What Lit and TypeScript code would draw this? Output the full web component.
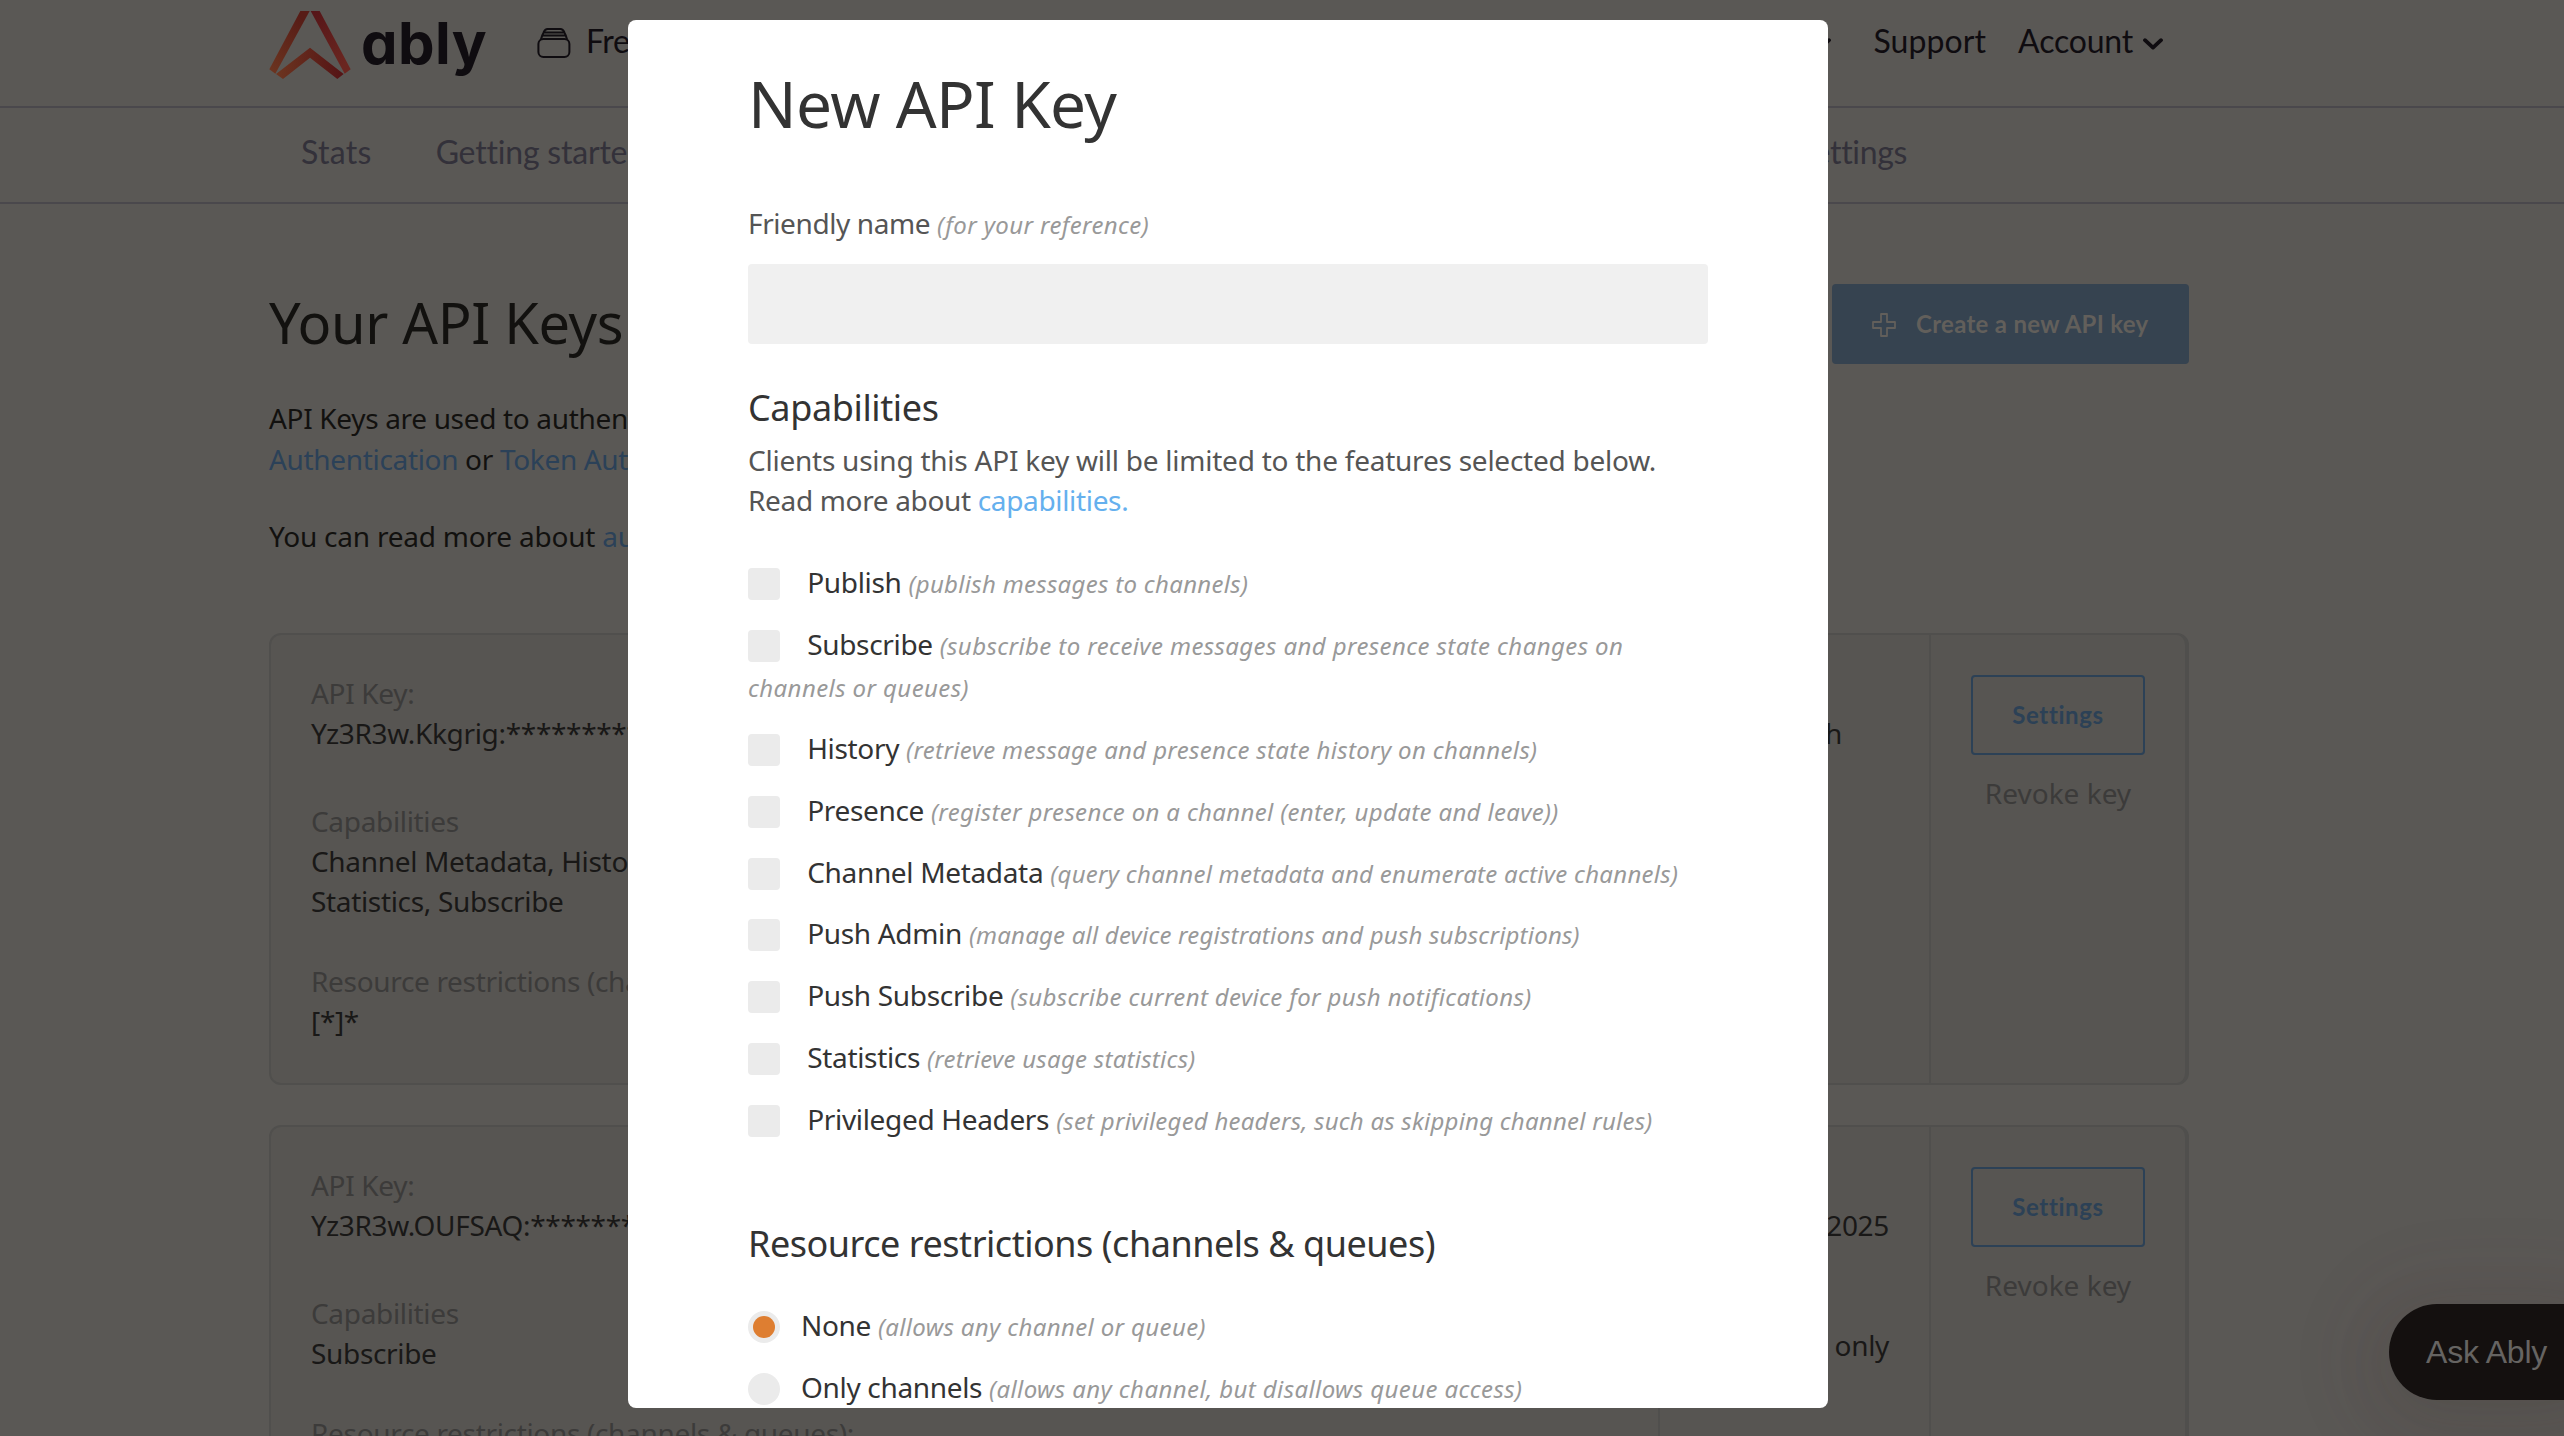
import { LitElement, html, css } from "lit";
import { customElement, state } from "lit/decorators.js";
import { styleMap } from "lit/directives/style-map.js";

interface Group {
  label?: string;
  lines: string[];
}

interface ApiKey {
  groups: Group[];
  details: Group[];
}

interface Option {
  name: string;
  hint: string;
  tracking?: number;
}

const KEYS: ApiKey[] = [
  {
    groups: [
      { label: "API Key:", lines: ["Yz3R3w.Kkgrig:*********"] },
      { label: "Capabilities", lines: ["Channel Metadata, History,", "Statistics, Subscribe"] },
      { label: "Resource restrictions (channels & queues):", lines: ["[*]*"] },
    ],
    details: [{ lines: ["March"] }],
  },
  {
    groups: [
      { label: "API Key:", lines: ["Yz3R3w.OUFSAQ:*********"] },
      { label: "Capabilities", lines: ["Subscribe"] },
      { label: "Resource restrictions (channels & queues):", lines: ["[*]*"] },
    ],
    details: [{ lines: ["2025"] }, { lines: ["only"] }],
  },
];

const CAPABILITIES: Option[] = [
  { name: "Publish", hint: "(publish messages to channels)", tracking: 0.3 },
  {
    name: "Subscribe",
    hint: "(subscribe to receive messages and presence state changes on channels or queues)",
    tracking: 0.4,
  },
  { name: "History", hint: "(retrieve message and presence state history on channels)", tracking: 0.33 },
  { name: "Presence", hint: "(register presence on a channel (enter, update and leave))", tracking: 0.33 },
  { name: "Channel Metadata", hint: "(query channel metadata and enumerate active channels)", tracking: 0.27 },
  { name: "Push Admin", hint: "(manage all device registrations and push subscriptions)", tracking: 0.2 },
  { name: "Push Subscribe", hint: "(subscribe current device for push notifications)" },
  { name: "Statistics", hint: "(retrieve usage statistics)", tracking: 0.26 },
  { name: "Privileged Headers", hint: "(set privileged headers, such as skipping channel rules)", tracking: 0.22 },
];

const RESTRICTIONS: Option[] = [
  { name: "None", hint: "(allows any channel or queue)" },
  { name: "Only channels", hint: "(allows any channel, but disallows queue access)", tracking: 0.4 },
];

const chevron = html`<svg class="chevron" width="20" height="12" viewBox="0 0 20 12">
  <path d="M2 2.2 10 9.6 18 2.2" fill="none" stroke="#0f0c10" stroke-width="3.8" stroke-linecap="round" stroke-linejoin="round" />
</svg>`;

@customElement("site-header")
export class SiteHeader extends LitElement {
  static styles = css`
    :host {
      display: block;
      font-family: Lato, "Noto Sans", sans-serif;
      font-size: 32px;
      white-space: nowrap;
    }
    .bar {
      display: flex;
      align-items: flex-start;
      height: 106px;
      padding: 0 401px 0 269px;
      border-bottom: 2px solid #4a484c;
      color: #0f0c10;
      line-height: 81px;
    }
    .mark {
      margin-top: 10px;
    }
    .word {
      margin-left: 10px;
      font: 700 58px/86px Inter, sans-serif;
      font-feature-settings: "cv11";
      letter-spacing: 0.4px;
    }
    .stack {
      margin: 28px 15px 0 50px;
    }
    .right {
      display: flex;
      margin-left: auto;
    }
    .chevron {
      margin-top: 38px;
    }
    .support {
      margin: 0 32px 0 42px;
      letter-spacing: 0.1px;
    }
    .account {
      margin-right: 10px;
      letter-spacing: -0.2px;
    }
    .tabs {
      display: flex;
      height: 94px;
      padding: 0 657px 0 301px;
      border-bottom: 2px solid #4a484c;
      color: #33313a;
      line-height: 88px;
    }
    .stats {
      letter-spacing: 0.3px;
    }
    .start {
      margin-left: 64px;
      letter-spacing: -0.2px;
    }
    .last {
      margin-left: auto;
    }
  `;

  render() {
    return html`
      <div class="bar">
        <svg class="mark" width="82" height="70" viewBox="0 0 246 210">
          <defs>
            <linearGradient id="l" x1="0" y1="1" x2="0.6" y2="0">
              <stop offset="0" stop-color="#6c3520" />
              <stop offset="1" stop-color="#571c16" />
            </linearGradient>
            <linearGradient id="r" x1="0" y1="0" x2="0.6" y2="1">
              <stop offset="0" stop-color="#551518" />
              <stop offset="1" stop-color="#6a2620" />
            </linearGradient>
            <linearGradient id="c" x1="0" y1="0.5" x2="1" y2="0.5">
              <stop offset="0" stop-color="#6c3520" />
              <stop offset="1" stop-color="#541315" />
            </linearGradient>
          </defs>
          <path d="M94 3h28L19 191 1 178z" fill="url(#l)" />
          <path d="M125 3h27l93 175-18 13z" fill="url(#r)" />
          <path d="M123 113l101 79-19 15-82-64-81 64-21-15z" fill="url(#c)" />
        </svg>
        <span class="word">ably</span>
        <svg class="stack" width="34" height="30" viewBox="0 0 34 30" fill="none" stroke="#0f0c10" stroke-width="2">
          <rect x="1.4" y="11" width="31" height="18" rx="5" />
          <path d="M4 11.2 5.2 7.6H28.8L30 11.2M5.2 7.6 6.6 4.4H27.4L28.8 7.6M6.6 4.4C7.6 2 8.6 1 10.6 1H23.4C25.4 1 26.4 2 27.4 4.4" />
        </svg>
        <span>Free</span>
        <div class="right">
          ${chevron}
          <span class="support">Support</span>
          <span class="account">Account</span>
          ${chevron}
        </div>
      </div>
      <div class="tabs">
        <span class="stats">Stats</span>
        <span class="start">Getting started</span>
        <span class="last">Settings</span>
      </div>
    `;
  }
}

@customElement("key-list")
export class KeyList extends LitElement {
  static styles = css`
    :host {
      display: flex;
      flex-direction: column;
      gap: 40px;
    }
    .card {
      display: flex;
      box-sizing: border-box;
      height: 452px;
      border: 2px solid #504f4d;
      border-right-width: 4px;
      border-radius: 12px;
      background: #575552;
      line-height: 40px;
      white-space: nowrap;
    }
    .info {
      flex: 1;
      padding: 38px 40px;
    }
    .group {
      margin-bottom: 40px;
    }
    .group:first-child {
      margin-bottom: 48px;
    }
    .label {
      color: #3c3b3a;
    }
    .value {
      color: #191817;
    }
    .details {
      box-sizing: border-box;
      width: 271px;
      padding: 78px 40px 0;
      border-left: 2px solid #504f4d;
      text-align: right;
    }
    .details .group {
      margin-bottom: 80px;
    }
    .card:first-child .details {
      padding-right: 87px;
    }
    .actions {
      display: flex;
      flex-direction: column;
      align-items: center;
      box-sizing: border-box;
      width: 256px;
      padding-top: 40px;
      border-left: 2px solid #504f4d;
    }
    .settings {
      box-sizing: border-box;
      width: 174px;
      height: 80px;
      border: 2px solid #2c4156;
      border-radius: 4px;
      color: #2c4156;
      font: 700 24px/75px Lato, sans-serif;
      letter-spacing: 0.6px;
      text-align: center;
    }
    .revoke {
      margin-top: 18px;
      color: #3c3b3a;
      letter-spacing: 0;
    }
  `;

  private group(g: Group) {
    return html`<div class="group">
      ${g.label ? html`<div class="label">${g.label}</div>` : null}
      ${g.lines.map((l) => html`<div class="value">${l}</div>`)}
    </div>`;
  }

  render() {
    return KEYS.map(
      (k) => html`<div class="card">
        <div class="info">${k.groups.map((g) => this.group(g))}</div>
        <div class="details">${k.details.map((g) => this.group(g))}</div>
        <div class="actions">
          <div class="settings">Settings</div>
          <div class="revoke">Revoke key</div>
        </div>
      </div>`
    );
  }
}

@customElement("new-key-dialog")
export class NewKeyDialog extends LitElement {
  @state() private restriction = "None";

  static styles = css`
    :host {
      display: block;
      box-sizing: border-box;
      padding: 44px 120px 0;
      overflow: hidden;
      border-radius: 8px;
      background: #fff;
      color: #333;
    }
    .title {
      margin: 0;
      font-size: 64px;
      font-weight: 400;
      line-height: 80px;
      letter-spacing: -0.65px;
    }
    .field {
      margin-top: 59px;
      color: #555;
      line-height: 40px;
      letter-spacing: -0.4px;
    }
    .hint {
      color: #999;
      font-size: 24px;
      font-style: italic;
      line-height: 1;
      letter-spacing: 0.36px;
    }
    .input {
      height: 80px;
      margin-top: 21px;
      border-radius: 4px;
      background: #f0f0f0;
    }
    .section {
      margin: 40px 0 0;
      font-size: 36px;
      font-weight: 400;
      line-height: 48px;
      letter-spacing: -0.38px;
    }
    .text {
      margin: 8px 0 42px;
      color: #555;
      line-height: 40px;
      letter-spacing: -0.24px;
    }
    .more {
      letter-spacing: -0.34px;
    }
    .link {
      color: #65b0ee;
    }
    .row {
      margin-bottom: 20px;
      line-height: 41.9px;
    }
    .box,
    .radio {
      display: inline-block;
      width: 32px;
      height: 32px;
      margin-right: 27.2px;
      border-radius: 4px;
      background: #ebebeb;
      vertical-align: -7px;
    }
    .radio {
      box-sizing: border-box;
      margin-right: 21px;
      padding: 5px;
      border-radius: 50%;
    }
    .dot {
      display: block;
      width: 22px;
      height: 22px;
      border-radius: 50%;
      background: #de7e31;
    }
    .restrict {
      margin: 79px 0 37px;
      letter-spacing: -0.47px;
    }
  `;

  private hint(o: Option) {
    return html`<span class="hint" style=${styleMap({ letterSpacing: `${o.tracking ?? 0.36}px` })}>${o.hint}</span>`;
  }

  render() {
    return html`
      <h1 class="title">New API Key</h1>
      <div class="field">Friendly name <span class="hint">(for your reference)</span></div>
      <div class="input"></div>
      <h2 class="section">Capabilities</h2>
      <p class="text">
        Clients using this API key will be limited to the features selected below.<br />
        <span class="more">Read more about <span class="link">capabilities.</span></span>
      </p>
      ${CAPABILITIES.map((o) => html`<div class="row"><span class="box"></span>${o.name} ${this.hint(o)}</div>`)}
      <h2 class="section restrict">Resource restrictions (channels &amp; queues)</h2>
      ${RESTRICTIONS.map(
        (o) => html`<div class="row" @click=${() => (this.restriction = o.name)}><span class="radio">${
          this.restriction === o.name ? html`<i class="dot"></i>` : null
        }</span>${o.name} ${this.hint(o)}</div>`
      )}
    `;
  }
}

@customElement("app-root")
export class AppRoot extends LitElement {
  static styles = css`
    :host {
      position: relative;
      display: block;
      width: 2564px;
      height: 1436px;
      overflow: hidden;
      background: #5a5855;
      font-family: "Noto Sans", sans-serif;
      font-size: 28px;
      letter-spacing: -0.33px;
    }
    .main {
      width: 1920px;
      padding: 80px 0 0 269px;
      color: #12110f;
    }
    .top {
      display: flex;
      justify-content: space-between;
      height: 80px;
    }
    .title {
      margin: 5.5px 0 0;
      font-size: 56px;
      font-weight: 400;
      line-height: 64px;
      letter-spacing: -0.35px;
    }
    .create {
      display: flex;
      align-items: center;
      box-sizing: border-box;
      width: 357px;
      height: 80px;
      padding-left: 40px;
      border-radius: 4px;
      background: #364350;
      color: #625f5b;
      font: 700 24px/78px Lato, sans-serif;
      letter-spacing: 0.3px;
    }
    .plus {
      margin: 2px 20px 0 0;
    }
    .text {
      margin: 34.4px 0 0;
      line-height: 41px;
      white-space: nowrap;
    }
    .more {
      margin-top: 35.4px;
      letter-spacing: -0.22px;
    }
    .link {
      color: #2b4158;
    }
    .keys {
      margin-top: 76.2px;
    }
    .dialog {
      position: absolute;
      left: 628px;
      top: 20px;
      width: 1200px;
      height: 1388px;
    }
    .ask {
      position: absolute;
      left: 2389px;
      top: 1304px;
      box-sizing: border-box;
      width: 220px;
      height: 96px;
      padding-left: 37px;
      border-radius: 48px;
      background: #14100f;
      box-shadow: 0 16px 60px rgba(40, 50, 40, 0.14), 0 8px 70px 40px rgba(100, 50, 50, 0.07);
      color: #666462;
      font: 32px/96px "Liberation Sans", sans-serif;
      letter-spacing: -0.2px;
    }
  `;

  render() {
    return html`
      <site-header></site-header>
      <div class="main">
        <div class="top">
          <h1 class="title">Your API Keys</h1>
          <div class="create">
            <svg class="plus" width="24" height="24" viewBox="0 0 24 24">
              <path d="M9 1h6v8h8v6h-8v8H9v-8H1V9h8z" fill="none" stroke="#625f5b" stroke-width="1.8" stroke-linejoin="round" />
            </svg>
            Create a new API key
          </div>
        </div>
        <p class="text">
          API Keys are used to authenticate<br />
          <span class="link">Authentication</span> or <span class="link">Token Auth</span>
        </p>
        <p class="text more">You can read more about <span class="link">auth</span></p>
        <key-list class="keys"></key-list>
      </div>
      <div class="ask">Ask Ably</div>
      <new-key-dialog class="dialog"></new-key-dialog>
    `;
  }
}
